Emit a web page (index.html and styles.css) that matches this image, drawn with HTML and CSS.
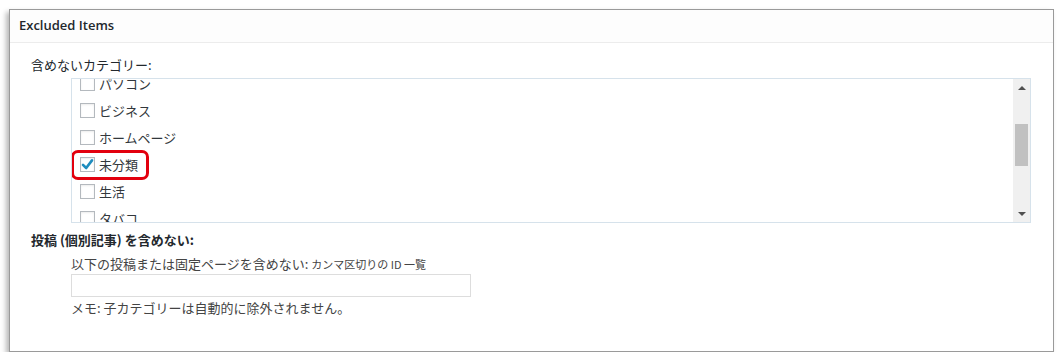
FILE: index.html
```html
<!DOCTYPE html>
<html lang="ja">
<head>
<meta charset="utf-8">
<title>Excluded Items</title>
<link rel="stylesheet" href="styles.css">
</head>
<body>
<div class="panel">
  <div class="panel-head">Excluded Items</div>
  <div class="panel-body">
    <div class="label">含めないカテゴリー:</div>
    <div class="listbox">
      <div class="list-view">
        <ul class="list">
          <li class="item"><span class="cb"></span><span class="txt">パソコン</span></li>
          <li class="item"><span class="cb"></span><span class="txt">ビジネス</span></li>
          <li class="item"><span class="cb"></span><span class="txt">ホームページ</span></li>
          <li class="item marked"><span class="cb checked"><svg viewBox="0 0 15 15" width="15" height="15"><path d="M3 7.8 L6.2 11 L12 3.4" fill="none" stroke="#1e8cbe" stroke-width="2.6" stroke-linecap="round" stroke-linejoin="round"/></svg></span><span class="txt">未分類</span><span class="highlight"></span></li>
          <li class="item"><span class="cb"></span><span class="txt">生活</span></li>
          <li class="item"><span class="cb"></span><span class="txt">タバコ</span></li>
        </ul>
      </div>
      <div class="scrollbar">
        <div class="sb-btn"><span class="tri-up"></span></div>
        <div class="sb-track"><div class="sb-thumb"></div></div>
        <div class="sb-btn"><span class="tri-down"></span></div>
      </div>
    </div>
    <div class="label label-posts">投稿 (個別記事) を含めない:</div>
    <div class="sub">
      <div class="desc">以下の投稿または固定ページを含めない: <span class="small">カンマ区切りの ID 一覧</span></div>
      <input class="field" type="text">
      <div class="desc memo">メモ: 子カテゴリーは自動的に除外されません。</div>
    </div>
  </div>
</div>
</body>
</html>
```

FILE: styles.css
```css
* { box-sizing: border-box; }
html, body { background: #fff; }
body {
  margin: 0;
  padding: 9px 9px 0 9px;
  font-family: "Noto Sans", "Noto Sans CJK JP", sans-serif;
  color: #23282d;
}
.panel {
  border: 1px solid #9a9a9a;
  background: #fff;
  box-shadow: -3px 3px 5px rgba(0,0,0,0.28);
}
.panel-head {
  height: 33px;
  line-height: 31px;
  padding-left: 9px;
  font-family: "Open Sans", "Noto Sans", sans-serif;
  font-size: 13px;
  font-weight: 600;
  background: #fdfdfd;
  border-bottom: 1px solid #ececec;
  color: #23282d;
}
.panel-body {
  padding: 12px 0 33px 21px;
}
.label {
  font-size: 13px;
  line-height: 20px;
  height: 20px;
  font-family: "Noto Sans CJK JP", sans-serif;
  color: #23282d;
}
.label-posts {
  font-weight: 700;
  margin-top: 7px;
}
.listbox {
  margin: 3px 0 0 40px;
  width: 960px;
  height: 145px;
  border: 1px solid #d6e2eb;
  display: flex;
  background: #fff;
}
.list-view {
  flex: 1;
  overflow: hidden;
}
.list {
  list-style: none;
  margin: -9px 0 0 0;
  padding: 0;
}
.item {
  position: relative;
  height: 27px;
  display: flex;
  align-items: center;
  padding-left: 8px;
  font-family: "Noto Sans CJK JP", sans-serif;
  font-size: 13px;
  color: #32373c;
}
.cb {
  width: 15px;
  height: 15px;
  border: 1px solid #b4b9be;
  background: #fff;
  box-shadow: inset 0 1px 2px rgba(0,0,0,0.08);
  margin-right: 4px;
  display: flex;
  align-items: center;
  justify-content: center;
  flex: none;
}
.cb.checked svg { display: block; margin: -1px; }
.txt { line-height: 15px; }
.highlight {
  position: absolute;
  left: -1px;
  top: -1px;
  width: 78px;
  height: 30px;
  border: 3px solid #e2000e;
  border-radius: 7px;
}
.scrollbar {
  width: 17px;
  flex: none;
  background: #f0f0f0;
  display: flex;
  flex-direction: column;
}
.sb-btn {
  height: 17px;
  display: flex;
  align-items: center;
  justify-content: center;
}
.tri-up {
  width: 0; height: 0;
  border-left: 4px solid transparent;
  border-right: 4px solid transparent;
  border-bottom: 4px solid #505050;
}
.tri-down {
  width: 0; height: 0;
  border-left: 4px solid transparent;
  border-right: 4px solid transparent;
  border-top: 4px solid #505050;
}
.sb-track { flex: 1; padding: 28px 2px 0 2px; }
.sb-thumb { height: 42px; background: #c1c1c1; }
.sub {
  padding-left: 40px;
  padding-top: 4px;
}
.desc {
  font-family: "Noto Sans CJK JP", sans-serif;
  font-size: 13px;
  line-height: 20px;
  height: 20px;
  color: #444;
}
.small { font-size: 11px; }
.field {
  display: block;
  width: 400px;
  height: 23px;
  margin: 0;
  border: 1px solid #dddddd;
  background: #fff;
  padding: 0 4px;
  font-size: 13px;
}
.memo { margin-top: 1px; }
```
